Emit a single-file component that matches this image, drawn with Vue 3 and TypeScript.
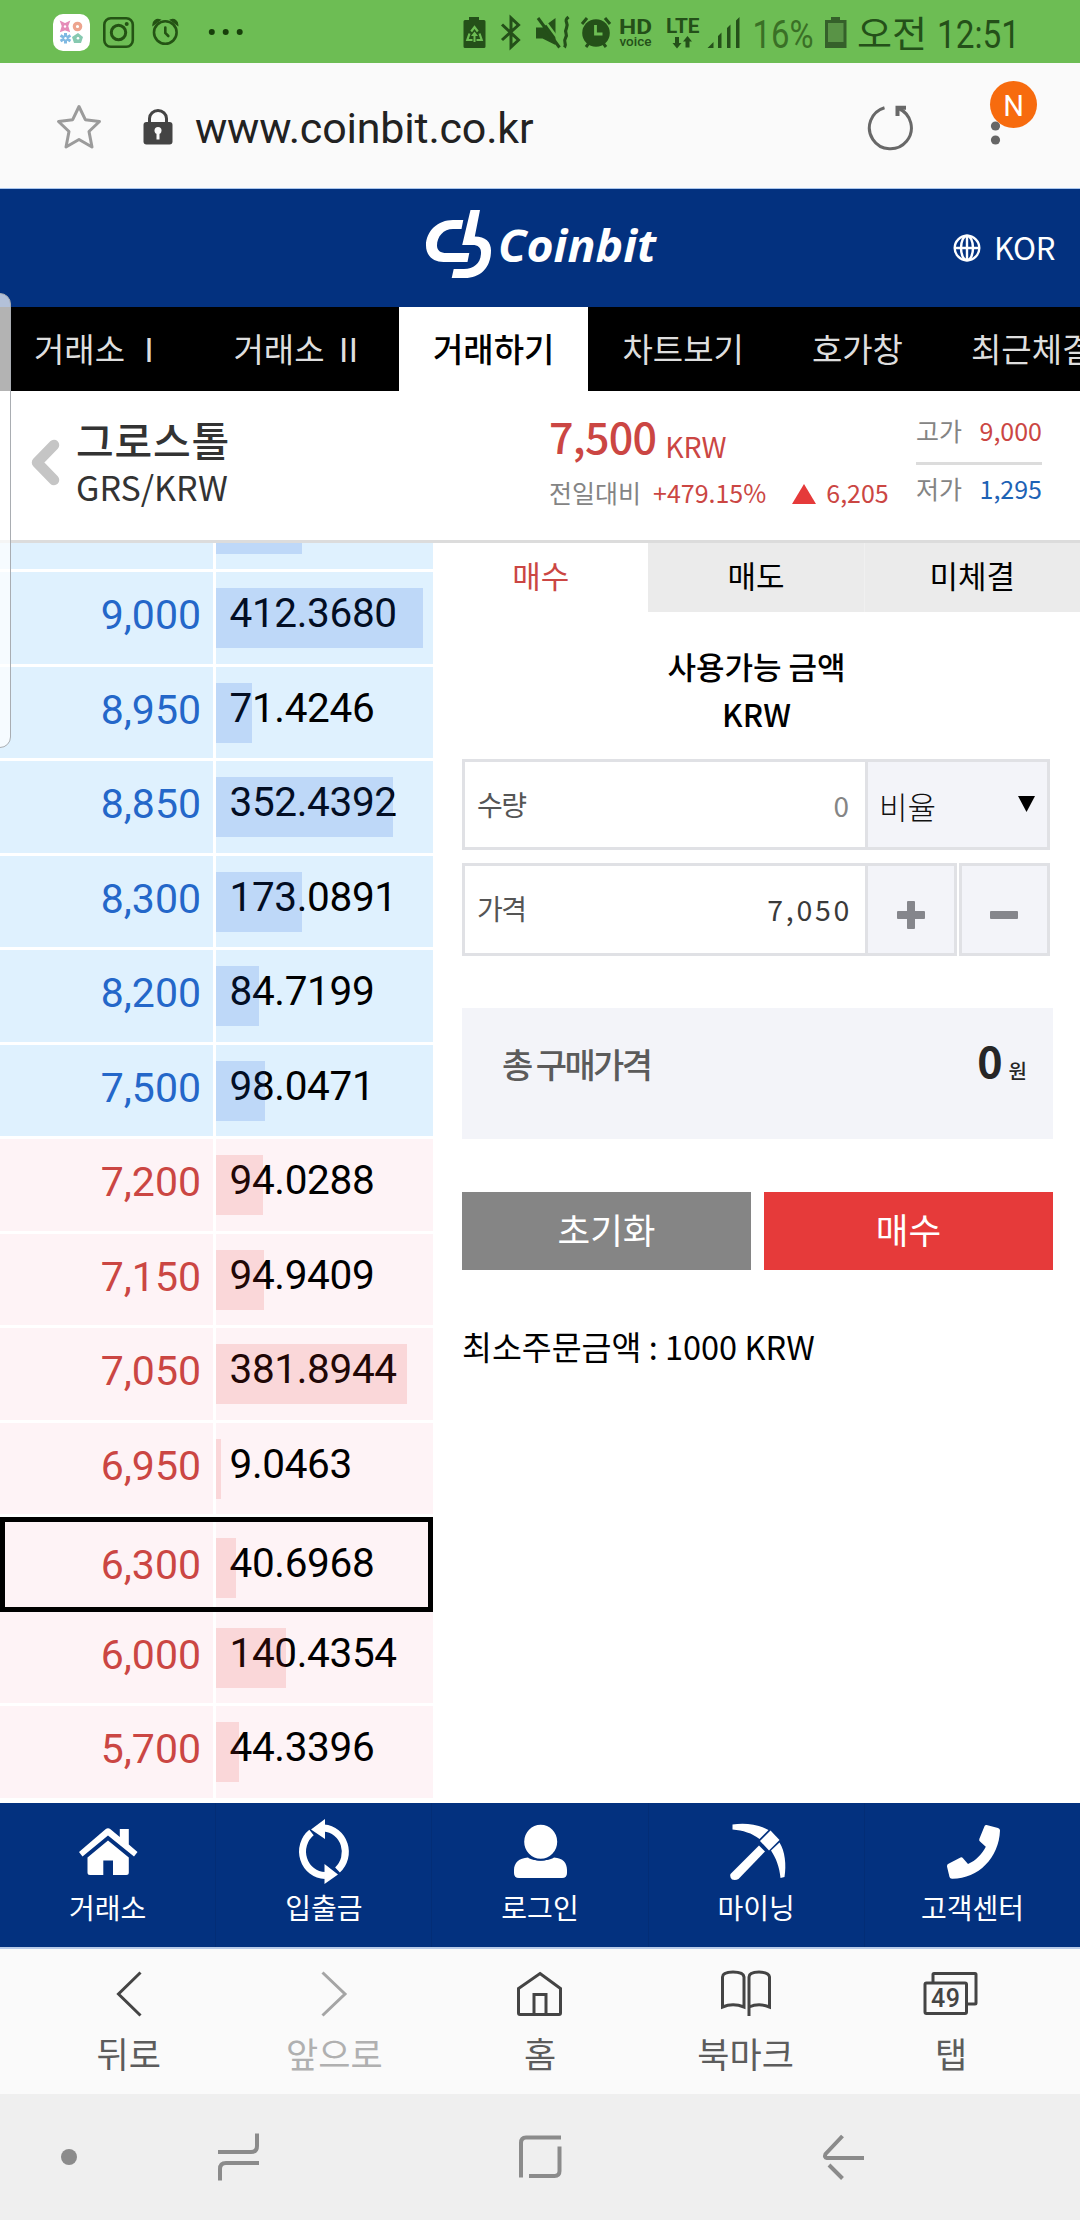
<script setup lang="ts">
interface Order {
  price: string
  amount: string
  bar: number
  side: 'ask' | 'bid'
  selected?: boolean
}

const tabs: string[] = ['거래소 Ⅰ', '거래소 Ⅱ', '거래하기', '차트보기', '호가창', '최근체결']
const activeTab = '거래하기'

const orders: Order[] = [
  { price: '', amount: '', bar: 86, side: 'ask' },
  { price: '9,000', amount: '412.3680', bar: 206.5, side: 'ask' },
  { price: '8,950', amount: '71.4246', bar: 36, side: 'ask' },
  { price: '8,850', amount: '352.4392', bar: 177, side: 'ask' },
  { price: '8,300', amount: '173.0891', bar: 86, side: 'ask' },
  { price: '8,200', amount: '84.7199', bar: 43, side: 'ask' },
  { price: '7,500', amount: '98.0471', bar: 49, side: 'ask' },
  { price: '7,200', amount: '94.0288', bar: 47, side: 'bid' },
  { price: '7,150', amount: '94.9409', bar: 48, side: 'bid' },
  { price: '7,050', amount: '381.8944', bar: 191, side: 'bid' },
  { price: '6,950', amount: '9.0463', bar: 4.5, side: 'bid' },
  { price: '6,300', amount: '40.6968', bar: 20, side: 'bid', selected: true },
  { price: '6,000', amount: '140.4354', bar: 70, side: 'bid' },
  { price: '5,700', amount: '44.3396', bar: 23, side: 'bid' },
]
</script>

<template>
  <div class="screen">
    <header class="status">
      <svg width="260" height="63" viewBox="0 0 260 63">
        <rect x="53" y="14" width="37" height="37" rx="10" fill="#fff" />
        <path d="M61 22l4 2 4-2-1.500 4 1.500 5-4-1.500-4 1.500 1.500-5z" fill="#e58cb8" stroke="#e58cb8" stroke-width="1.500" />
        <circle cx="77.500" cy="26.500" r="3.200" fill="none" stroke="#eda48e" stroke-width="3.200" />
        <path d="M65.500 33v10.500M60.500 35.500l10 5.500M70.500 35.500l-10 5.500" stroke="#7fb9e2" stroke-width="3" />
        <path d="M78 33l5 4-2 6h-7l-2-6z" fill="#86c9b0" />
        <g fill="#fff"><circle cx="65" cy="26.500" r="1.200" /><circle cx="65.500" cy="38.300" r="1.200" /><circle cx="78" cy="38.300" r="1.300" /></g>
        <g fill="none" stroke="#245314" stroke-width="2.600">
          <rect x="104.300" y="18.300" width="28.500" height="28.500" rx="6.500" />
          <circle cx="118.500" cy="32.500" r="7.200" stroke-width="3" />
          <circle cx="165.300" cy="32.500" r="11.300" />
          <path d="M165.300 27.500v5.500l3 3" stroke-linecap="round" />
        </g>
        <circle cx="126.700" cy="24" r="2" fill="#245314" />
        <path d="M153 25a5 5 0 0 1 7-5zM177.700 25a5 5 0 0 0-7-5z" fill="#245314" stroke="#245314" stroke-width="1.500" />
        <g fill="#173f0a"><circle cx="211.800" cy="32" r="3" /><circle cx="225.700" cy="32" r="3" /><circle cx="239.700" cy="32" r="3" /></g>
      </svg>
      <svg width="630" height="63" viewBox="450 0 630 63" fill="#245019">
        <path d="M469 17h10v3h5q1.500 0 1.500 1.500V46.500q0 1.500-1.500 1.500H465q-1.500 0-1.500-1.500V21.500q0-1.500 1.500-1.500h4z" />
        <path d="M471.200 31.500l3.300-4.500 3.300 4.500M469.500 33.500l-2.200 6.500h5.200M479.500 33.500l2.200 6.500h-5.200" fill="none" stroke="#6dbd54" stroke-width="2.200" />
        <path d="M474.500 31.500l3.500 4.500h-7zM473.500 35h2v7h-2z" fill="#6dbd54" />
        <path d="M502 24.500l16.500 15.500-7.500 7V18l7.500 7L502 40" fill="none" stroke="#245019" stroke-width="3" />
        <path d="M536 27.500h6.500L555.500 18v27l-13-6.500H536z" />
        <path d="M541 15.500l22 30" stroke="#6dbd54" stroke-width="2.400" />
        <path d="M538 18l21.500 29.500" stroke="#245019" stroke-width="3" />
        <path d="M568.500 17c-6 5 1 5-2 11s2 5-1 10 2 5-1 9.500" fill="none" stroke="#245019" stroke-width="3.200" />
        <circle cx="596" cy="33" r="13.800" />
        <path d="M582 24l5-6M610 24l-5-6M586 47l3-4M606 47l-3-4" stroke="#245019" stroke-width="3" />
        <path d="M595.500 25v9h7" fill="none" stroke="#6dbd54" stroke-width="2.800" />
        <text class="roboto" x="619" y="34" font-size="20" font-weight="700" textLength="33" lengthAdjust="spacingAndGlyphs">HD</text>
        <text class="roboto" x="619.500" y="46.300" font-size="13.500" font-weight="500" textLength="32" lengthAdjust="spacingAndGlyphs">voice</text>
        <text class="roboto" x="666" y="32.500" font-size="20" font-weight="700" textLength="33.500" lengthAdjust="spacingAndGlyphs">LTE</text>
        <path d="M675 37h4v6h2.500l-4.500 5.500-4.500-5.500h2.500zM685.500 47.500h4v-6h2.500l-4.500-5.500-4.500 5.500h2.500z" />
        <path d="M707.500 48l6-6v6zM718 36l3.500-3.500v15.500H718zM727 28l3.500-3.500V48H727zM736 20.500l3.500-3.500v31H736z" />
        <text class="roboto" x="752.500" y="48" font-size="39.500" textLength="61" lengthAdjust="spacingAndGlyphs" fill="#3a7026">16%</text>
        <path d="M831 17h9v3h6.500v28H825V20h6z" fill="#35602a" />
        <path d="M828 23h15.500v19H828z" fill="#599346" />
        <text class="kr" x="857" y="47.500" font-size="37" textLength="70" lengthAdjust="spacingAndGlyphs">오전</text>
        <text class="roboto" x="937" y="48" font-size="39.500" textLength="83" lengthAdjust="spacingAndGlyphs">12:51</text>
      </svg>
    </header>

    <div class="urlbar">
      <svg class="star" width="48" height="48" viewBox="0 0 48 48" fill="none" stroke="#9b9b9b" stroke-width="3" stroke-linejoin="round"><path d="M24 4.500l6.300 13.200 14.200 1.800-10.500 10 3 15.500L24 37.500 11 45l3-15.500-10.500-10 14.200-1.800z" /></svg>
      <svg class="lock" width="30" height="36" viewBox="0 0 30 36"><rect x=".5" y="13" width="29" height="22.500" rx="3" fill="#444" /><path d="M6.500 14V9.500a8.500 8 0 0 1 17 0V14" fill="none" stroke="#444" stroke-width="3" /><circle cx="15" cy="21.500" r="3.500" fill="#fafafa" /><path d="M13.500 22h3v8.500h-3z" fill="#fafafa" /></svg>
      <span class="url">www.coinbit.co.kr</span>
      <svg class="reload" width="48" height="48" viewBox="0 0 48 48" fill="none" stroke="#686868" stroke-width="3"><path d="M18.500 4.700A21 21 0 1 0 32.500 5.500" /><path d="M40 4.700h-8.500V13" stroke-width="4" /></svg>
      <svg class="menu" width="60" height="70" viewBox="0 0 60 70"><circle cx="15.500" cy="47" r="4.600" fill="#666" /><circle cx="15.500" cy="61" r="4.600" fill="#666" /><circle cx="33.500" cy="25.500" r="23.500" fill="#f76b0e" /><text class="roboto" x="33.500" y="37" font-size="29" text-anchor="middle" fill="#fff">N</text></svg>
    </div>

    <div class="brand">
      <svg class="logo" width="240" height="80" viewBox="420 204 240 80" fill="#fff">
        <path d="M463.300 220H453C438 220 426 231 426 245.500c0 10.500 7.500 16.500 17.500 16.500H467.500L469.300 253H446.500C440.500 253 437 250.500 437 245.500 437 236.500 443.500 229 453 229H461.500Z" />
        <path d="M470.500 210H480L474.800 236.500C485.500 236.500 491 242 491 250.500 491 267 481 278 465 278H451.700L453.700 269H464C474 269 481 263 481 252.500 481 247.500 478 245 472.500 245H462.200Z" />
        <text class="logo-text" x="498" y="262.300" font-size="45" textLength="158" lengthAdjust="spacingAndGlyphs">Coinbit</text>
      </svg>
      <div class="lang">
        <svg width="28" height="28" viewBox="0 0 28 28" fill="none" stroke="#fff" stroke-width="2.400"><circle cx="14" cy="14" r="12.300" /><ellipse cx="14" cy="14" rx="6" ry="12.300" /><path d="M14 1.500v25M1.500 14h25" /></svg>
        <span>KOR</span>
      </div>
    </div>

    <nav class="tabs">
      <span v-for="t in tabs" :key="t" :class="{ on: t === activeTab }">{{ t }}</span>
    </nav>

    <section class="summary">
      <div class="back">
        <svg width="30" height="47" viewBox="0 0 30 47"><path d="M24 6L7 23.500 24 41" fill="none" stroke="#c5c5c5" stroke-width="10.500" stroke-linecap="round" stroke-linejoin="round" /></svg>
      </div>
      <div class="coin"><b>그로스톨</b><span>GRS/KRW</span></div>
      <div class="quote">
        <div class="last"><b>7,500</b><span>KRW</span></div>
        <div class="change"><span class="muted">전일대비</span><span class="pct">+479.15%</span><i></i><span>6,205</span></div>
      </div>
      <div class="range">
        <div class="high"><span>고가</span><em>9,000</em></div>
        <div class="low"><span>저가</span><em>1,295</em></div>
      </div>
    </section>

    <main class="trade">
      <div class="book">
        <div v-for="(o, i) in orders" :key="i" class="row" :class="[o.side, { selected: o.selected }]">
          <div class="price">{{ o.price }}</div>
          <div class="amount">{{ o.amount }}<i class="bar" :style="{ width: o.bar + 'px' }"></i></div>
        </div>
      </div>

      <div class="panel">
        <div class="sides"><span class="on">매수</span><span>매도</span><span>미체결</span></div>
        <div class="avail"><div>사용가능 금액</div><div>KRW</div></div>
        <div class="field qty">
          <label>수량</label><span class="zero">0</span>
          <div class="ratio"><span>비율</span><i></i></div>
        </div>
        <div class="price-line">
          <div class="field cost"><label>가격</label><span class="val">7,050</span></div>
          <div class="step plus"><svg width="28" height="28" viewBox="0 0 28 28" fill="#85868c"><rect y="10" width="28" height="8" rx="1" /><rect x="10" width="8" height="28" rx="1" /></svg></div>
          <div class="step"><svg width="28" height="28" viewBox="0 0 28 28" fill="#85868c"><rect y="10" width="28" height="8" rx="1" /></svg></div>
        </div>
        <div class="total"><span class="total-label">총 구매가격</span><span class="sum"><b>0</b><small>원</small></span></div>
        <div class="actions"><button class="reset">초기화</button><button class="buy">매수</button></div>
        <p class="min">최소주문금액 : 1000 KRW</p>
      </div>
    </main>

    <nav class="site-nav">
      <div>
        <svg viewBox="0 0 72 72"><path d="M7 37L33.500 14.300Q36 12.200 38.500 14.300L47.800 22V14H56.800V29.500L65.500 37 62 41.500 36 20.500 10.500 41.500Z" /><path d="M36 25.500L56.800 42.500V57.500Q56.800 60 54.300 60H41V45.500H31.300V60H18Q15.500 60 15.500 57.500V42.500Z" /></svg>
        <span>거래소</span>
      </div>
      <div>
        <svg viewBox="0 0 72 72"><g fill="none" stroke="#fff" stroke-width="7"><path d="M36 13A23 24 0 0 1 49.500 55" /><path d="M23.500 17.500A23 24 0 0 0 37 60.500" /></g><path d="M37 4V24L23 14.500ZM36.500 49V69L50 59.500Z" /></svg>
        <span>입출금</span>
      </div>
      <div>
        <svg viewBox="0 0 72 72"><path d="M24 42.500C28 46.500 45 46.500 50 42.500 59 43 63 48 63 55V58Q63 63 58 63H15Q10 63 10 58V55C10 48 15 43 24 42.500Z" /><ellipse cx="36.700" cy="26.800" rx="17.500" ry="18" stroke="#03317f" stroke-width="2" /></svg>
        <span>로그인</span>
      </div>
      <div>
        <svg viewBox="0 0 72 72"><path d="M10.500 59L39 30.500 45 36.500 18.500 64Q15.500 65.500 12 64.500 9.500 62 10.500 59Z" /><path d="M50.500 15.500L59.500 25 49 35.500 40 26Z" /><path d="M12.500 9.500C24 7.500 38 9 48.500 15L39.500 24C32 18 23 15.500 12.500 14.500Z" /><path d="M59.500 27.500C65 36 66.500 50 64.500 62L60.500 63C59.500 52 56 43 51 35.500Z" /></svg>
        <span>마이닝</span>
      </div>
      <div>
        <svg viewBox="0 0 72 72"><path d="M50.600 10L62 13Q64 13.500 64 15.500C63 43 42 64 16 63.700Q14 63.700 13.500 62L11 51.500Q10.700 49.500 12.500 48.700L24.500 42.500Q26 42 27 43.200L32 49C40 45.500 46 39 49.800 31.700L44 26.500Q42.800 25.500 43.300 24L48.600 11Q49.200 9.700 50.600 10Z" /></svg>
        <span>고객센터</span>
      </div>
    </nav>

    <nav class="browser-nav">
      <div>
        <svg viewBox="0 0 56 48"><path d="M39.500 2.500L17.500 24 39.500 45.500" /></svg><span>뒤로</span>
      </div>
      <div class="off">
        <svg viewBox="0 0 56 48"><path d="M16.500 2.500L39 24 16.500 45.500" /></svg><span>앞으로</span>
      </div>
      <div>
        <svg viewBox="0 0 56 48"><path d="M28 3.500L48.500 18.500V43Q48.500 44.500 47 44.500H8Q6.500 44.500 6.500 43V18.500ZM22 44.500V24.500H34V44.500" /></svg><span>홈</span>
      </div>
      <div>
        <svg viewBox="0 0 56 48"><path d="M4.500 37V7Q4.500 2 15 2T26 7V37Q15 32.500 4.500 37ZM31 46V7Q31 2 41 2T51.500 7V37Q41 32.500 31 37" /></svg><span>북마크</span>
      </div>
      <div>
        <svg viewBox="0 0 56 48"><path d="M10 12V4.500Q10 3.500 11 3.500H52Q53 3.500 53 4.500V33Q53 34 52 34H45M3.500 13H42Q43.500 13 43.500 14.500V42Q43.500 43.500 42 43.500H3.500Q2 43.500 2 42V14.500Q2 13 3.500 13Z" /><text class="roboto" x="22.500" y="36.500" font-size="25" font-weight="500" textLength="29" text-anchor="middle">49</text></svg><span>탭</span>
      </div>
    </nav>

    <footer class="system-nav">
      <i class="dot"></i>
      <svg class="recents" width="42" height="48" viewBox="0 0 42 48"><path d="M0 19H33Q39 19 39 13V0.500M41 30H8Q2 30 2 36V47.500" /></svg>
      <svg class="home" width="44" height="44" viewBox="0 0 44 44"><path d="M3 42.500V8Q3 2.500 8 2.500H43M41.500 11.500V36Q41.500 41 36.500 41H11" /></svg>
      <svg class="prev" width="44" height="46" viewBox="0 0 44 46"><path d="M20.500 2L3.500 20Q2 23.500 5 24H42M7 31L20.500 44.500" /></svg>
    </footer>

    <div class="edge-handle"></div>
  </div>
</template>

<style>
body { margin: 0; }
</style>

<style scoped>
* { box-sizing: border-box; }
.screen { position: relative; width: 1080px; height: 2220px; overflow: hidden; background: #fff; color: #000; font-family: "Noto Sans CJK KR", sans-serif; white-space: nowrap; display: flex; flex-direction: column; }
.screen > * { flex: none; }
svg { display: block; }
b { font-weight: 500; }
em, i { font-style: normal; }
.roboto { font-family: Roboto, sans-serif; }
.kr { font-family: "Noto Sans CJK KR", sans-serif; }

.status { height: 63px; background: #6dbd54; display: flex; justify-content: space-between; }
.urlbar { height: 126px; background: #fafafa; border-bottom: 1px solid #a9c6ee; display: flex; align-items: flex-start; }
.star { margin: 39px 0 0 55px; }
.lock { margin: 46px 0 0 40px; }
.url { margin: 37px 0 0 22px; width: 671px; font: 43px/56px Roboto, sans-serif; color: #222; letter-spacing: -0.200px; }
.reload { margin: 40px 0 0 0; }
.menu { margin: 16px 0 0 66px; }

.brand { height: 118px; background: #03317f; display: flex; align-items: flex-start; }
.logo { margin: 15px 0 0 420px; }
.logo-text { font-family: "Open Sans", sans-serif; font-weight: 700; font-style: italic; }
.lang { display: flex; align-items: center; height: 117px; margin-left: 293px; gap: 13px; color: #fff; font-size: 31px; letter-spacing: -0.300px; }
.lang span { margin-top: -2px; }

.tabs { height: 84px; background: #000; display: flex; overflow: hidden; }
.tabs span { flex: none; padding: 0 34px; font-size: 33px; line-height: 82px; color: #dedede; }
.tabs .on { background: #fff; color: #000; font-weight: 500; }

.summary { height: 152px; border-bottom: 3px solid #dcdcdc; display: grid; grid-template-columns: 76px 473px 367px 126px; }
.back { padding: 48px 0 0 30px; }
.coin { padding-top: 24px; color: #333; display: flex; flex-direction: column; }
.coin b { font-size: 41px; line-height: 48px; letter-spacing: 0.800px; }
.coin span { font-size: 34px; line-height: 47px; }
.quote { padding-top: 20px; color: #cb4643; }
.last { display: flex; height: 69px; }
.last b { font-size: 43px; line-height: 49px; letter-spacing: -0.700px; }
.last span { font-size: 28.500px; line-height: 70px; margin-left: 9px; letter-spacing: -0.300px; }
.change { display: flex; align-items: center; font-size: 25px; line-height: 25px; }
.muted { color: #848484; }
.pct { margin-left: 12px; }
.change i { border: 12.500px solid transparent; border-top: 0; border-bottom: 20px solid #e53a3a; margin: 2px 10px 0 26px; }
.range { padding-top: 19px; font-size: 25px; color: #848484; }
.range div { display: flex; justify-content: space-between; }
.high { height: 55px; border-bottom: 3px solid #dcdcdc; line-height: 40px; }
.high em { color: #cb4643; }
.low { line-height: 46px; }
.low em { color: #1d62b5; }

.trade { height: 1260px; display: flex; }
.book { width: 433px; overflow: hidden; font-family: Roboto, sans-serif; font-size: 40.500px; display: flex; flex-direction: column; }
.row { position: relative; flex: none; height: 94.500px; border-bottom: 3px solid #fff; display: grid; grid-template-columns: 213px 218px; column-gap: 2.500px; }
.row:first-child { margin-top: -65.500px; }
.price { text-align: right; padding-right: 12px; line-height: 87px; font-size: 41px; }
.amount { position: relative; padding-left: 14px; line-height: 82.600px; letter-spacing: -0.350px; }
.ask .price { color: #2467c9; }
.bid .price { color: #cb4643; }
.ask > div { background: #dff1fe; }
.bid > div { background: #fef3f6; }
.bar { position: absolute; left: 0.500px; top: 16px; height: 60px; }
.ask .bar { background: rgba(20, 90, 220, 0.160); }
.bid .bar { background: rgba(225, 50, 40, 0.140); }
.selected { border-bottom-color: #000; }
.selected > div { padding-top: 5px; }
.selected .bar { top: 21px; }
.selected::after { content: ""; position: absolute; inset: 0 0 -3px; border: 5px solid #000; }

.panel { width: 647px; }
.sides { display: flex; height: 69px; font-size: 31px; line-height: 63px; }
.sides span { flex: 1; text-align: center; background: #ebebeb; }
.sides span + span + span { border-left: 1px solid #f0f0f0; }
.sides .on { background: #fff; color: #cb4643; }
.avail { padding-top: 30px; height: 147px; text-align: center; font-size: 31px; line-height: 47.500px; font-weight: 500; }
.field { background: #fff; border: 3px solid #e0e1e5; display: flex; align-items: flex-start; color: #555; }
.field label { font-size: 28px; letter-spacing: -1.500px; padding-left: 12px; line-height: 85px; }
.qty { width: 588px; height: 91px; margin-left: 29px; }
.zero { margin-left: auto; padding-right: 16px; font-size: 28px; line-height: 86px; color: #858585; }
.ratio { width: 182px; height: 85px; background: #f3f4f9; border-left: 3px solid #e0e1e5; display: flex; justify-content: space-between; padding: 0 12px 0 11px; color: #111; font-size: 31px; font-weight: 300; line-height: 87px; }
.ratio i { width: 17px; height: 16px; margin-top: 34px; background: #000; clip-path: polygon(0 0, 100% 0, 50% 100%); }
.price-line { margin: 13px 0 0 29px; display: flex; width: 588px; height: 93px; }
.cost { width: 403px; border-right: 0; }
.val { margin-left: auto; padding-right: 13px; font-size: 28.500px; letter-spacing: 2.700px; line-height: 86px; color: #3a3a3a; }
.step { width: 91.500px; border: 3px solid #e0e1e5; background: #f3f4f9; display: flex; justify-content: center; padding-top: 35px; }
.plus { margin-right: 2px; }
.total { margin: 52px 0 0 29px; width: 591px; height: 131px; background: #f3f4f9; display: flex; justify-content: space-between; padding: 0 26px 0 40px; }
.total-label { font-size: 34px; letter-spacing: -2.600px; line-height: 112px; color: #5b5b5b; font-weight: 500; }
.sum { display: flex; color: #262626; }
.sum b { font-size: 43px; font-weight: 700; line-height: 103px; }
.sum small { font-size: 20px; font-weight: 500; line-height: 125px; margin-left: 6px; }
.actions { margin: 53px 0 0 29px; width: 591px; display: flex; gap: 13px; }
.actions button { flex: 1; height: 78px; border: 0; padding: 0 0 4px; font: 35.500px/74px "Noto Sans CJK KR", sans-serif; color: #fff; }
.reset { background: #858585; }
.buy { background: #e63a3a; }
.min { margin: 52px 0 0 29px; font-size: 32.500px; line-height: 48px; }

.site-nav { height: 146px; background: #03317f; border-bottom: 2px solid #b9cbe8; display: flex; }
.site-nav div { flex: 1; padding-top: 12px; display: flex; flex-direction: column; align-items: center; color: #fff; font-size: 28px; line-height: 40px; }
.site-nav div + div { border-left: 1px solid #032d76; }
.site-nav svg { width: 72px; height: 72px; fill: #fff; }

.browser-nav { height: 145px; background: #fafafa; padding: 21px 26px 0; display: flex; }
.browser-nav div { flex: 1; display: flex; flex-direction: column; align-items: center; gap: 13px; color: #5c5c5c; font-size: 35px; line-height: 44px; }
.browser-nav svg { width: 56px; height: 48px; fill: none; stroke: #444; stroke-width: 3px; }
.browser-nav text { fill: #444; stroke: none; }
.browser-nav .off { color: #b0b0b0; }
.browser-nav .off svg { stroke: #a5a5a5; }

.system-nav { height: 126px; background: #efefef; display: flex; align-items: center; }
.system-nav svg { fill: none; stroke: #8b8b8b; stroke-width: 4px; }
.dot { width: 16px; height: 16px; border-radius: 50%; background: #8b8b8b; margin-left: 61px; }
.recents { margin-left: 141px; }
.home { margin-left: 258px; }
.prev { margin-left: 260px; }

.edge-handle { position: absolute; left: -3px; top: 293px; width: 14px; height: 455px; background: rgba(255, 255, 255, 0.700); border: 1px solid #a9adb2; border-radius: 0 11px 11px 0; }
</style>
